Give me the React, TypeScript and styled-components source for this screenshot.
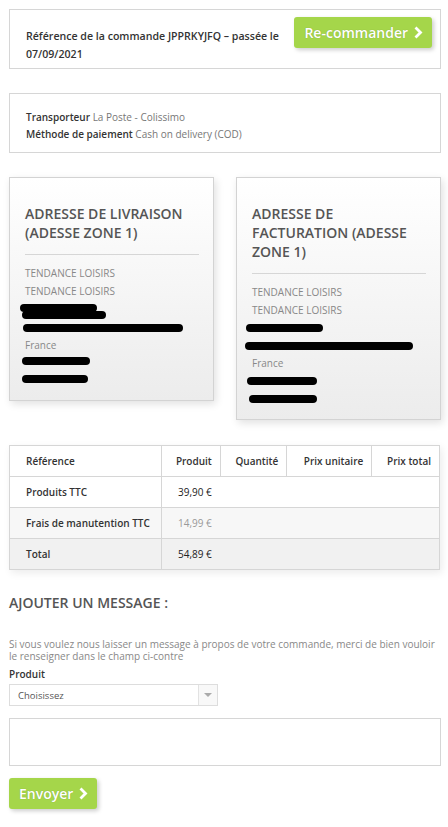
import styled, { createGlobalStyle } from "styled-components";

const GlobalStyle = createGlobalStyle`
  html, body {
    margin: 0;
    padding: 0;
    background: #ffffff;
    font-family: "Open Sans", "DejaVu Sans", sans-serif;
    color: #414141;
  }
  * { box-sizing: border-box; }
`;

const Page = styled.div`
  width: 448px;
  padding: 9px 7px 20px 9px;
  display: flex;
  flex-direction: column;
`;

const Box = styled.div<{ $mt?: number }>`
  border: 1px solid #d6d6d6;
  background: #fff;
  margin-top: ${(p) => p.$mt ?? 0}px;
`;

const HeaderBox = styled(Box)`
  height: 60px;
  display: flex;
  align-items: flex-start;
  justify-content: space-between;
  padding: 7px 8px 0 16px;
`;

const HeaderText = styled.p`
  margin: 10px 0 0 0;
  font-size: 10.6px;
  font-weight: 600;
  line-height: 18px;
  width: 272px;
  color: #333;
`;

const GreenButton = styled.button`
  display: inline-flex;
  align-items: center;
  gap: 6px;
  height: 31px;
  padding: 0 9px 0 10px;
  border: none;
  border-radius: 3px;
  background: #a5d64a;
  color: #fff;
  font-family: "Open Sans", sans-serif;
  font-weight: 600;
  font-size: 14px;
  white-space: nowrap;
  box-shadow: 2px 2px 4px rgba(0, 0, 0, 0.2);
  text-shadow: 0 0 1px rgba(0, 0, 0, 0.25);
  cursor: pointer;
`;

const InfoBox = styled(Box)`
  height: 60px;
  padding: 15px 16px 0 16px;
`;

const InfoLine = styled.div`
  font-size: 10px;
  line-height: 17px;
  color: #777;
  b {
    font-weight: 600;
    color: #333;
  }
`;

const Addresses = styled.div`
  display: flex;
  justify-content: space-between;
  align-items: flex-start;
  margin-top: 24px;
`;

const AddressCard = styled.div<{ $h: number }>`
  width: 205px;
  height: ${(p) => p.$h}px;
  border: 1px solid #d3d3d3;
  background: linear-gradient(to bottom, #ffffff 0%, #ececec 100%);
  box-shadow: 2px 3px 8px rgba(0, 0, 0, 0.12);
  padding: 26px 14px 0 15px;
`;

const CardTitle = styled.h3`
  margin: 0;
  font-size: 14px;
  font-weight: 600;
  line-height: 19px;
  color: #555;
  text-transform: uppercase;
  padding-bottom: 12px;
  border-bottom: 1px solid #d6d6d6;
  margin-bottom: 9px;
`;

const CardLine = styled.div<{ $mt?: number }>`
  font-size: 10px;
  line-height: 18px;
  color: #888;
  margin-top: ${(p) => p.$mt ?? 0}px;
`;

const Redact = styled.div<{ $w: number; $ml?: number; $mt?: number }>`
  width: ${(p) => p.$w}px;
  height: 8px;
  margin-left: ${(p) => p.$ml ?? 0}px;
  margin-top: ${(p) => p.$mt ?? 0}px;
  border-radius: 4px;
  background: #000;
`;

const Table = styled.table`
  margin-top: 25px;
  width: 431px;
  border-collapse: collapse;
  font-size: 10px;
  box-shadow: 2px 3px 8px rgba(0, 0, 0, 0.08);
  td,
  th {
    border: 1px solid #d6d6d6;
    height: 31px;
    padding: 0 8px;
  }
`;

const Th = styled.th<{ $left?: boolean }>`
  font-weight: 600;
  text-align: ${(p) => (p.$left ? "left" : "right")};
  color: #333;
  background: #fff;
  &:first-child {
    padding-left: 16px;
    width: 152px;
  }
`;

const Tr = styled.tr<{ $bg: string }>`
  background: ${(p) => p.$bg};
`;

const Label = styled.td`
  font-weight: 600;
  color: #333;
  padding-left: 16px !important;
`;

const Value = styled.td<{ $muted?: boolean }>`
  color: ${(p) => (p.$muted ? "#999" : "#222")};
  padding-left: 16px !important;
`;

const SectionTitle = styled.h2`
  margin: 24px 0 0 0;
  font-size: 14px;
  font-weight: 600;
  color: #555;
  text-transform: uppercase;
  line-height: 18px;
`;

const Para = styled.p`
  margin: 26px 0 0 0;
  font-size: 10px;
  line-height: 12px;
  color: #888;
`;

const FieldLabel = styled.div`
  margin-top: 5px;
  font-size: 10px;
  font-weight: 600;
  color: #333;
  line-height: 15px;
`;

const Select = styled.div`
  margin-top: 2px;
  width: 209px;
  height: 22px;
  border: 1px solid #ddd;
  display: flex;
  align-items: center;
  justify-content: space-between;
  font-size: 9.5px;
  color: #555;
  padding-left: 8px;
`;

const Arrow = styled.div`
  width: 19px;
  height: 20px;
  border-left: 1px solid #e2e2e2;
  background: #f8f8f8;
  display: flex;
  align-items: center;
  justify-content: center;
  &::after {
    content: "";
    border-left: 4px solid transparent;
    border-right: 4px solid transparent;
    border-top: 4px solid #aaa;
  }
`;

const TextArea = styled.div`
  margin-top: 12px;
  width: 432px;
  height: 48px;
  border: 1px solid #d6d6d6;
`;

const SendRow = styled.div`
  margin-top: 12px;
`;

const Chevron = () => (
  <svg width="9" height="13" viewBox="0 0 9 13">
    <path d="M1.5 1.5 L6.5 6.5 L1.5 11.5" stroke="#fff" strokeWidth="2.8" fill="none" />
  </svg>
);

export default function App() {
  return (
    <>
      <GlobalStyle />
      <Page>
        <HeaderBox>
          <HeaderText>
            Référence de la commande JPPRKYJFQ – passée le 07/09/2021
          </HeaderText>
          <GreenButton>
            Re-commander <Chevron />
          </GreenButton>
        </HeaderBox>

        <InfoBox $mt={24}>
          <InfoLine>
            <b>Transporteur</b> La Poste - Colissimo
          </InfoLine>
          <InfoLine>
            <b>Méthode de paiement</b> Cash on delivery (COD)
          </InfoLine>
        </InfoBox>

        <Addresses>
          <AddressCard $h={224}>
            <CardTitle>Adresse de livraison (Adesse zone 1)</CardTitle>
            <CardLine>TENDANCE LOISIRS</CardLine>
            <CardLine>TENDANCE LOISIRS</CardLine>
            <Redact $w={77} $ml={-5} $mt={4} />
            <Redact $w={84} $ml={-3} $mt={-1} />
            <Redact $w={160} $ml={-2} $mt={5} />
            <CardLine $mt={4}>France</CardLine>
            <Redact $w={68} $ml={-3} $mt={3} />
            <Redact $w={66} $ml={-3} $mt={10} />
          </AddressCard>
          <AddressCard $h={243}>
            <CardTitle>Adresse de facturation (Adesse zone 1)</CardTitle>
            <CardLine>TENDANCE LOISIRS</CardLine>
            <CardLine>TENDANCE LOISIRS</CardLine>
            <Redact $w={77} $ml={-6} $mt={5} />
            <Redact $w={168} $ml={-7} $mt={10} />
            <CardLine $mt={4}>France</CardLine>
            <Redact $w={70} $ml={-5} $mt={5} />
            <Redact $w={68} $ml={-3} $mt={10} />
          </AddressCard>
        </Addresses>

        <Table>
          <thead>
            <tr>
              <Th $left>Référence</Th>
              <Th>Produit</Th>
              <Th>Quantité</Th>
              <Th>Prix unitaire</Th>
              <Th>Prix total</Th>
            </tr>
          </thead>
          <tbody>
            <Tr $bg="#ffffff">
              <Label>Produits TTC</Label>
              <Value colSpan={4}>39,90 €</Value>
            </Tr>
            <Tr $bg="#f7f7f7">
              <Label>Frais de manutention TTC</Label>
              <Value colSpan={4} $muted>
                14,99 €
              </Value>
            </Tr>
            <Tr $bg="#f1f1f1">
              <Label>Total</Label>
              <Value colSpan={4}>54,89 €</Value>
            </Tr>
          </tbody>
        </Table>

        <SectionTitle>Ajouter un message :</SectionTitle>
        <Para>
          Si vous voulez nous laisser un message à propos de votre commande, merci de bien vouloir
          le renseigner dans le champ ci-contre
        </Para>
        <FieldLabel>Produit</FieldLabel>
        <Select>
          Choisissez
          <Arrow />
        </Select>
        <TextArea />
        <SendRow>
          <GreenButton>
            Envoyer <Chevron />
          </GreenButton>
        </SendRow>
      </Page>
    </>
  );
}
